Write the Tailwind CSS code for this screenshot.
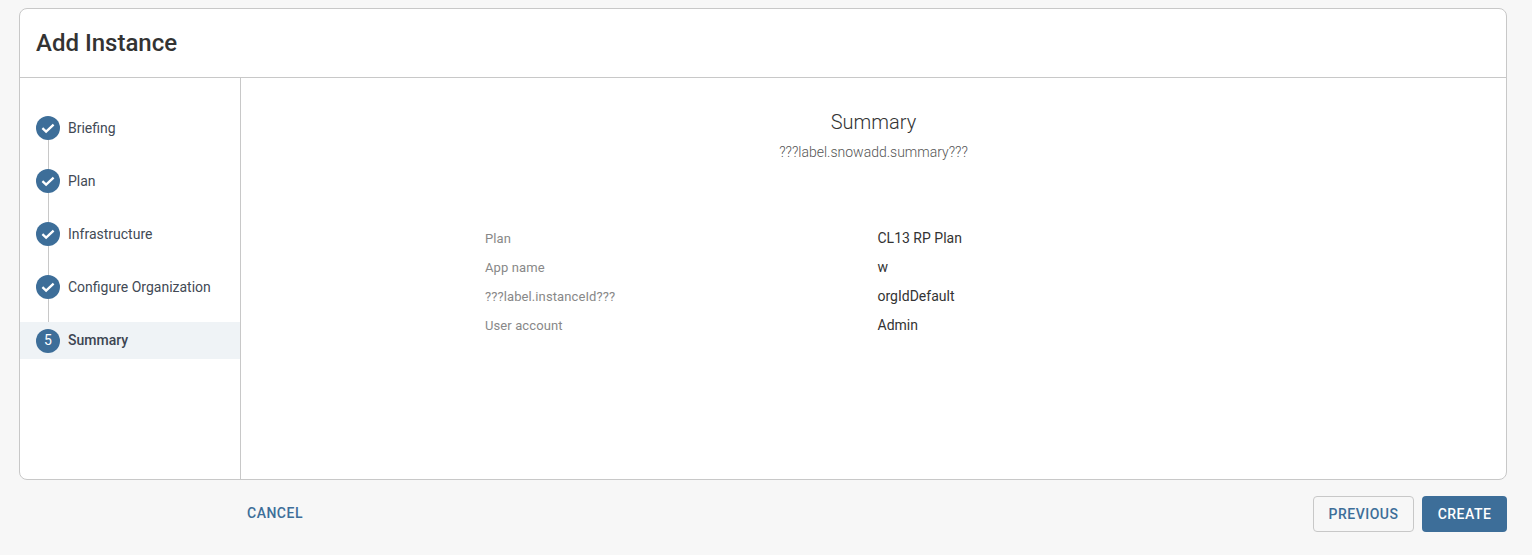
<!DOCTYPE html>
<html lang="en">
  <head>
    <meta charset="UTF-8" />
    <title>Add Instance</title>
    <script src="https://cdn.jsdelivr.net/npm/@tailwindcss/browser@4"></script>
  </head>
  <body class="bg-[#f7f7f7] h-[555px] overflow-hidden font-['Roboto',sans-serif] text-[#333]">
    <div class="pt-[8px] pl-[19px] pr-[25px]">
      <!-- card -->
      <div class="h-[472px] bg-white border border-[#c8c8c8] rounded-[8px] flex flex-col">
        <div class="h-[69px] shrink-0 border-b border-[#c8c8c8] pl-[16px] flex items-center">
          <h1 class="text-[24px] font-medium text-[#333]">Add Instance</h1>
        </div>
        <div class="flex flex-1 min-h-0">
          <!-- steps -->
          <div class="w-[221px] shrink-0 border-r border-[#c8c8c8] pt-[38px]">
            <div class="h-[53px] pl-[16px] flex items-start relative">
              <div class="absolute left-[28px] top-[24px] w-px h-[30px] bg-[#c8c8c8]"></div>
              <div class="w-[24px] h-[24px] rounded-full bg-[#3d6e99] flex items-center justify-center">
                <svg width="16" height="16" viewBox="0 0 16 16" fill="none" stroke="white" stroke-width="2.3"><path d="M2.4 8.2l3.7 3.4L13.6 4.6" /></svg>
              </div>
              <span class="ml-[8px] text-[14px] leading-[24px] text-[#424a55]">Briefing</span>
            </div>
            <div class="h-[53px] pl-[16px] flex items-start relative">
              <div class="absolute left-[28px] top-[24px] w-px h-[30px] bg-[#c8c8c8]"></div>
              <div class="w-[24px] h-[24px] rounded-full bg-[#3d6e99] flex items-center justify-center">
                <svg width="16" height="16" viewBox="0 0 16 16" fill="none" stroke="white" stroke-width="2.3"><path d="M2.4 8.2l3.7 3.4L13.6 4.6" /></svg>
              </div>
              <span class="ml-[8px] text-[14px] leading-[24px] text-[#424a55]">Plan</span>
            </div>
            <div class="h-[53px] pl-[16px] flex items-start relative">
              <div class="absolute left-[28px] top-[24px] w-px h-[30px] bg-[#c8c8c8]"></div>
              <div class="w-[24px] h-[24px] rounded-full bg-[#3d6e99] flex items-center justify-center">
                <svg width="16" height="16" viewBox="0 0 16 16" fill="none" stroke="white" stroke-width="2.3"><path d="M2.4 8.2l3.7 3.4L13.6 4.6" /></svg>
              </div>
              <span class="ml-[8px] text-[14px] leading-[24px] text-[#424a55]">Infrastructure</span>
            </div>
            <div class="h-[47px] pl-[16px] flex items-start relative">
              <div class="absolute left-[28px] top-[24px] w-px h-[23px] bg-[#c8c8c8]"></div>
              <div class="w-[24px] h-[24px] rounded-full bg-[#3d6e99] flex items-center justify-center">
                <svg width="16" height="16" viewBox="0 0 16 16" fill="none" stroke="white" stroke-width="2.3"><path d="M2.4 8.2l3.7 3.4L13.6 4.6" /></svg>
              </div>
              <span class="ml-[8px] text-[14px] leading-[24px] text-[#424a55]">Configure Organization</span>
            </div>
            <div class="h-[37px] pl-[16px] bg-[#eff3f6] flex items-center">
              <div class="w-[24px] h-[24px] rounded-full bg-[#3d6e99] flex items-center justify-center text-white text-[14px] font-normal">5</div>
              <span class="ml-[8px] text-[14px] font-medium text-[#3c4552]">Summary</span>
            </div>
          </div>
          <!-- content -->
          <div class="flex-1 min-w-0 pt-[32px]">
            <div class="text-center">
              <h2 class="text-[20px] leading-[24px] font-light text-[#333]">Summary</h2>
              <p class="mt-[8px] text-[14px] leading-[20px] font-light text-[#555]">???label.snowadd.summary???</p>
            </div>
            <dl class="mt-[62px] ml-[244px] grid grid-cols-[392.5px_1fr] auto-rows-[29px] text-[13px] leading-[29px]">
              <dt class="text-[#888] tracking-[0.1px]">Plan</dt><dd class="text-[14px] text-[#333]">CL13 RP Plan</dd>
              <dt class="text-[#888] tracking-[0.1px]">App name</dt><dd class="text-[14px] text-[#333]">w</dd>
              <dt class="text-[#888] tracking-[0.1px]">???label.instanceId???</dt><dd class="text-[14px] text-[#333]">orgIdDefault</dd>
              <dt class="text-[#888] tracking-[0.1px]">User account</dt><dd class="text-[14px] text-[#333]">Admin</dd>
            </dl>
          </div>
        </div>
      </div>
      <!-- footer -->
      <div class="mt-[16px] flex items-center">
        <button class="ml-[228px] -mt-px text-[14px] font-medium tracking-[0.5px] text-[#3d6e99]">CANCEL</button>
        <button class="ml-auto w-[101px] h-[36px] border border-[#c8c8c8] rounded-[4px] text-[14px] font-medium tracking-[0.5px] text-[#3d6e99]">PREVIOUS</button>
        <button class="ml-[8px] w-[85px] h-[36px] rounded-[4px] bg-[#3d6e99] text-[14px] font-medium tracking-[0.5px] text-white">CREATE</button>
      </div>
    </div>
  </body>
</html>
